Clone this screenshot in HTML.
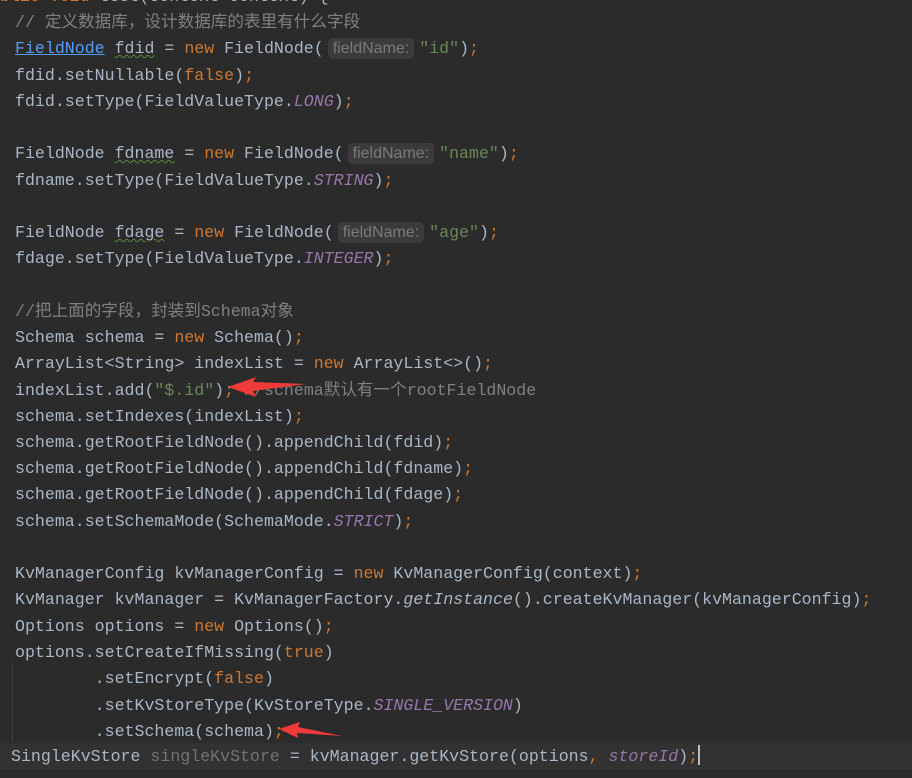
<!DOCTYPE html>
<html><head><meta charset="utf-8"><style>
body{margin:0;width:912px;height:778px;overflow:hidden;background:#2b2b2b;position:relative}
.l{position:absolute;left:15px;height:26px;line-height:26px;white-space:pre;font-family:"Liberation Mono","Noto Sans CJK SC",monospace;font-size:16.6px;color:#a9b7c6;margin-top:2px}
.k{color:#cc7832}.s{color:#6a8759}.c{color:#808080}.i{color:#9876aa;font-style:italic}.f{font-style:italic}
.g{color:#72737a}
.h{display:inline-block;background:#3b3b3d;color:#7a7a7a;font-family:"Liberation Sans",sans-serif;font-size:16px;line-height:21px;height:21px;padding:0 5px;border-radius:4px;margin:0 5px 0 4px;vertical-align:0px}
.u{color:#589df6;text-decoration:underline}
.w{text-decoration:underline wavy #5a8a3a;text-decoration-thickness:1px}
</style></head><body>
<div style="position:absolute;left:0;top:743px;width:912px;height:27px;background:#323232"></div>
<div style="position:absolute;left:12px;top:662px;width:1px;height:80px;background:#3c3c3c"></div>
<div class="l" style="top:-18px;left:-10px"><span class="k">ublic void</span> test(Context context) {</div>
<div class="l c" style="top:8px">// 定义数据库，设计数据库的表里有什么字段</div>
<div class="l" style="top:34px"><span class="u">FieldNode</span> <span class="w">fdid</span> = <span class="k">new</span> FieldNode(<span class="h">fieldName:</span><span class="s">"id"</span>)<span class="k">;</span></div>
<div class="l" style="top:61px">fdid.setNullable(<span class="k">false</span>)<span class="k">;</span></div>
<div class="l" style="top:87px">fdid.setType(FieldValueType.<span class="i">LONG</span>)<span class="k">;</span></div>
<div class="l" style="top:139px">FieldNode <span class="w">fdname</span> = <span class="k">new</span> FieldNode(<span class="h">fieldName:</span><span class="s">"name"</span>)<span class="k">;</span></div>
<div class="l" style="top:166px">fdname.setType(FieldValueType.<span class="i">STRING</span>)<span class="k">;</span></div>
<div class="l" style="top:218px">FieldNode <span class="w">fdage</span> = <span class="k">new</span> FieldNode(<span class="h">fieldName:</span><span class="s">"age"</span>)<span class="k">;</span></div>
<div class="l" style="top:244px">fdage.setType(FieldValueType.<span class="i">INTEGER</span>)<span class="k">;</span></div>
<div class="l c" style="top:297px">//把上面的字段，封装到Schema对象</div>
<div class="l" style="top:323px">Schema schema = <span class="k">new</span> Schema()<span class="k">;</span></div>
<div class="l" style="top:349px">ArrayList&lt;String&gt; indexList = <span class="k">new</span> ArrayList&lt;&gt;()<span class="k">;</span></div>
<div class="l" style="top:376px">indexList.add(<span class="s">"$.id"</span>)<span class="k">;</span> <span class="c">//schema默认有一个rootFieldNode</span></div>
<div class="l" style="top:402px">schema.setIndexes(indexList)<span class="k">;</span></div>
<div class="l" style="top:428px">schema.getRootFieldNode().appendChild(fdid)<span class="k">;</span></div>
<div class="l" style="top:454px">schema.getRootFieldNode().appendChild(fdname)<span class="k">;</span></div>
<div class="l" style="top:480px">schema.getRootFieldNode().appendChild(fdage)<span class="k">;</span></div>
<div class="l" style="top:507px">schema.setSchemaMode(SchemaMode.<span class="i">STRICT</span>)<span class="k">;</span></div>
<div class="l" style="top:559px">KvManagerConfig kvManagerConfig = <span class="k">new</span> KvManagerConfig(context)<span class="k">;</span></div>
<div class="l" style="top:585px">KvManager kvManager = KvManagerFactory.<span class="f">getInstance</span>().createKvManager(kvManagerConfig)<span class="k">;</span></div>
<div class="l" style="top:612px">Options options = <span class="k">new</span> Options()<span class="k">;</span></div>
<div class="l" style="top:638px">options.setCreateIfMissing(<span class="k">true</span>)</div>
<div class="l" style="top:664px">        .setEncrypt(<span class="k">false</span>)</div>
<div class="l" style="top:691px">        .setKvStoreType(KvStoreType.<span class="i">SINGLE_VERSION</span>)</div>
<div class="l" style="top:717px">        .setSchema(schema)<span class="k">;</span></div>
<div class="l" style="top:742px;left:11px">SingleKvStore <span class="g">singleKvStore</span> = kvManager.getKvStore(options<span class="k">,</span> <span class="i">storeId</span>)<span class="k">;</span><span style="display:inline-block;width:2px;height:20px;background:#bbb;vertical-align:-4px"></span></div>
<svg style="position:absolute;left:0;top:0" width="912" height="778">
<polygon points="228,387 256,377 253,382 306,384 253,391 256,397" fill="#f03a3a"/>
<polygon points="279,729 300,722 298,727 342,736 297,733 298,738" fill="#f03a3a"/>
</svg>
</body></html>
